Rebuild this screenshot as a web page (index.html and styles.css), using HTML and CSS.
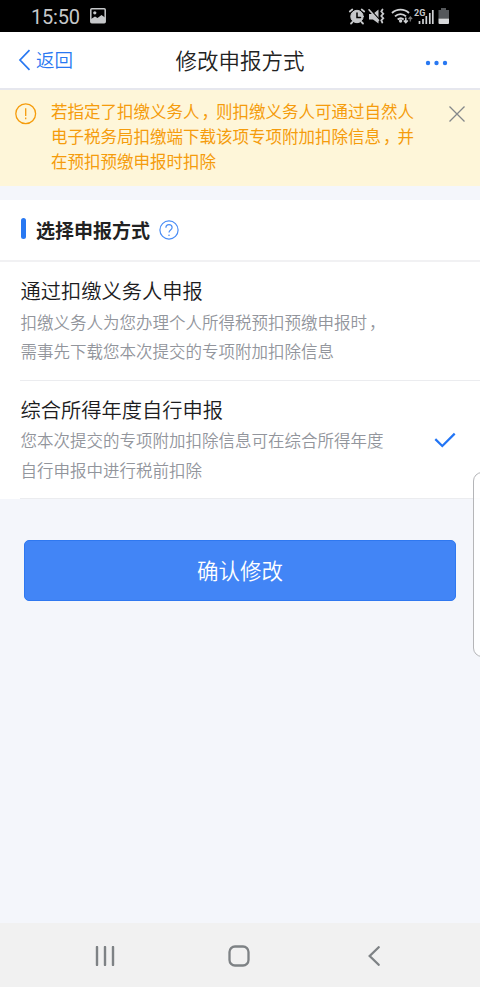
FILE: index.html
```html
<!DOCTYPE html>
<html lang="zh-CN">
<head>
<meta charset="utf-8">
<title>修改申报方式</title>
<link rel="stylesheet" href="styles.css">
</head>
<body>
<div class="phone">
  <header class="status">
    <span class="clock">15:50</span>
    <svg class="photo" width="16" height="16" viewBox="0 0 16 16"><rect x=".8" y=".8" width="14.4" height="14" rx="1" fill="none" stroke="#c6c8ca" stroke-width="1.5"/><circle cx="4.8" cy="4.8" r="1.6" fill="#c6c8ca"/><path d="M1 11l4-2.500 2.500 1.500L11.500 7 15 9.500V15H1z" fill="#c6c8ca"/></svg>
    <svg class="signals" width="104" height="18" viewBox="0 0 104 18">
      <g fill="#c6c8ca" stroke="#c6c8ca" stroke-linecap="round">
        <circle cx="9" cy="8.500" r="6.200"/>
        <path d="M1.800 3.500l2.500-2M16.200 3.500l-2.500-2M4.500 14L3 15.500M13.500 14l1.500 1.500" stroke-width="1.800" fill="none"/>
        <path d="M9 5V9.500h3.500" stroke="#000" stroke-width="1.500" fill="none"/>
        <path d="M21 6h4l5.500-4.500v14L25 11.500h-4z" stroke="none"/>
        <path d="M22 1.500l10 11" stroke="#000" stroke-width="1.800"/>
        <path d="M21 1.800l9.500 10.500" stroke-width="1.600"/>
        <path d="M34.500 1.500l-1.200 2 2 2.200-2 2.300 2 2.200-2 2.300 1 2" fill="none" stroke-width="1.800"/>
      </g>
      <g fill="none" stroke="#d0d2d4" stroke-width="1.900">
        <path d="M44 5c4.600-4.500 12.500-4.500 17 0M47 8.400c3-3 8-3 11 0M49.700 11.500c1.800-1.600 4.200-1.600 6 0"/>
        <path d="M57.800 9.500v5M55.800 12.500l2 2.200 2-2.200" stroke-width="1.500"/>
        <path d="M62.300 13.500V9M60.500 11l1.800-2 1.800 2" stroke-width="1.200" stroke="#777"/>
      </g>
      <circle cx="52.600" cy="13" r="1.700" fill="#d0d2d4"/>
      <text x="66" y="8" class="net">2G</text>
      <path d="M71.500 13v3M75 11v5M78.300 8V16M81.800 5V16M84.800 2V16" stroke="#d0d2d4" stroke-width="1.700"/>
      <path d="M93 2V0h5v2h3v8.500H90.500V2z" fill="#55585b"/><path d="M90.500 10.500H101V15q0 1-1 1h-8.500q-1 0-1-1z" fill="#d7d9db"/>
    </svg>
  </header>
  <nav class="titlebar">
    <a class="back"><svg width="14" height="22" viewBox="0 0 14 22"><path d="M11.500 1.200L2 11l9.500 9.800" fill="none" stroke="#2878f2" stroke-width="1.700"/></svg><span>返回</span></a>
    <h1>修改申报方式</h1>
    <svg class="more" width="24" height="6" viewBox="0 0 24 6"><g fill="#2878f2"><circle cx="3" cy="3" r="2.200"/><circle cx="11.500" cy="3" r="2.200"/><circle cx="20" cy="3" r="2.200"/></g></svg>
  </nav>
  <section class="notice">
    <svg class="warn" width="22" height="22" viewBox="0 0 22 22"><circle cx="10.700" cy="10.700" r="9.900" fill="none" stroke="#f59c0c" stroke-width="1.300"/><path d="M10.700 5.200v7.800M10.700 14.500v1.700" stroke="#f59c0c" stroke-width="1.300"/></svg>
    <p>若指定了扣缴义务人<span class="comma">，</span>则扣缴义务人可通过自然人<br>电子税务局扣缴端下载该项专项附加扣除信息<span class="comma">，</span>并<br>在预扣预缴申报时扣除</p>
    <svg class="close" width="18" height="18" viewBox="0 0 18 18"><path d="M1.500 1.500l15 15M16.500 1.500l-15 15" stroke="#84878a" stroke-width="1.300"/></svg>
  </section>
  <main class="card">
    <div class="heading">
      <i class="bar"></i>
      <h2>选择申报方式</h2>
      <svg width="20" height="20" viewBox="0 0 20 20"><circle cx="10" cy="10" r="9.100" fill="none" stroke="#4a8df5" stroke-width="1.200"/><path d="M6.900 7.800c0-4.200 6.200-4 6.200-.2 0 2.400-3.100 2.500-3.100 5" fill="none" stroke="#4a8df5" stroke-width="1.200"/><circle cx="10" cy="15.200" r=".8" fill="#4a8df5"/></svg>
    </div>
    <article class="option">
      <div><h3>通过扣缴义务人申报</h3>
      <p>扣缴义务人为您办理个人所得税预扣预缴申报时<span class="comma">，</span><br>需事先下载您本次提交的专项附加扣除信息</p></div>
    </article>
    <article class="option">
      <div><h3>综合所得年度自行申报</h3>
      <p>您本次提交的专项附加扣除信息可在综合所得年度<br>自行申报中进行税前扣除</p></div>
      <svg width="22" height="16" viewBox="0 0 22 16"><path d="M1.300 7.100l7 6.900L20.700 1.600" fill="none" stroke="#2275f5" stroke-width="2.200"/></svg>
    </article>
  </main>
  <button class="confirm">确认修改</button>
  <div class="edge"></div>
  <footer class="keys">
    <svg width="20" height="20" viewBox="0 0 20 20"><path d="M2 1v18M10 1v18M18 1v18" stroke="#7e8285" stroke-width="2.400" stroke-linecap="round"/></svg>
    <svg class="home" width="22" height="22" viewBox="0 0 22 22"><rect x="1.500" y="1.500" width="19" height="19" rx="5.500" fill="none" stroke="#7e8285" stroke-width="2.300"/></svg>
    <svg width="12" height="20" viewBox="0 0 12 20"><path d="M10.700 1.200L1.700 10l9 8.800" fill="none" stroke="#7e8285" stroke-width="2.300" stroke-linecap="round"/></svg>
  </footer>
</div>
</body>
</html>
```
FILE: styles.css
```css
* { box-sizing: border-box; margin: 0; padding: 0; }
body { font-family: "Noto Sans CJK SC", sans-serif; font-weight: 350; }
svg { display: block; flex: none; }
.phone { position: relative; display: flex; flex-direction: column; width: 480px; height: 987px; overflow: hidden; background: #f4f6fb; }
.status { display: flex; align-items: flex-start; height: 32px; padding: 0 28px 0 31px; background: #000; flex: none; }
.clock { font: 400 20px/34px Roboto, sans-serif; letter-spacing: -.2px; color: #c6c8ca; width: 59px; }
.photo { margin-top: 8px; }
.signals { margin: 8px 0 0 auto; }
.net { font: 700 9px Roboto, sans-serif; fill: #c6c8ca; }
.titlebar { display: grid; grid-template-columns: 1fr auto 1fr; align-items: center; height: 58px; padding: 0 31px 0 18px; background: #fff; border-bottom: 2px solid #e6e7ee; flex: none; }
.back { display: flex; align-items: center; gap: 4px; font-size: 18.5px; line-height: 28px; color: #2878f2; }
.back span { padding-bottom: 2px; }
.titlebar h1 { font-size: 21.500px; font-weight: 350; line-height: 32px; color: #222; margin-left: 13px; padding-bottom: 1px; }
.more { justify-self: end; margin-top: 5px; }
.notice { display: flex; height: 96px; padding: 9px 14px 0 15px; background: #fef6d9; color: #f59c0c; flex: none; }
.warn { margin: 4px 14px 0 0; }
.notice p { font-size: 16.500px; font-weight: 400; line-height: 25px; white-space: nowrap; }
.comma { padding-left: 2px; letter-spacing: -2px; }
.close { margin: 6px 0 0 auto; }
.card { margin-top: 14px; height: 299px; background: #fff; flex: none; }
.heading { display: flex; align-items: center; height: 62px; padding: 0 20px 0 21px; border-bottom: 2px solid #f1f1f3; }
.bar { width: 5px; height: 21px; margin: -3px 10px 0 0; border-radius: 2.500px; background: #2878f2; }
.heading h2 { font-size: 19px; font-weight: 700; line-height: 28px; color: #222; margin-right: 9px; }
.option { display: flex; align-items: center; justify-content: space-between; height: 118.500px; margin-left: 20px; padding: 1px 24px 0 .5px; border-bottom: 1.500px solid #ebecef; }
.option h3 { font-size: 20.250px; font-weight: 350; line-height: 30px; padding-bottom: 1.500px; color: #1c1c1e; }
.option p { font-size: 16.500px; line-height: 29.500px; color: #92959c; white-space: nowrap; }
.confirm { margin: 41px 24px 0; height: 61px; padding-bottom: 2px; border: 1px solid #2f78f0; border-radius: 5px; background: #4285f6; color: #fff; font: 350 21.500px/57px "Noto Sans CJK SC", sans-serif; flex: none; }
.edge { position: absolute; top: 472px; left: 473px; width: 20px; height: 185px; border: 1px solid #b4b5b8; border-radius: 9px; background: rgba(255,255,255,.82); }
.keys { display: flex; justify-content: space-between; align-items: center; height: 64px; margin-top: auto; padding: 1px 100.500px 0 95px; background: #f1f1f1; flex: none; }
.home { margin-right: 5px; }
```
